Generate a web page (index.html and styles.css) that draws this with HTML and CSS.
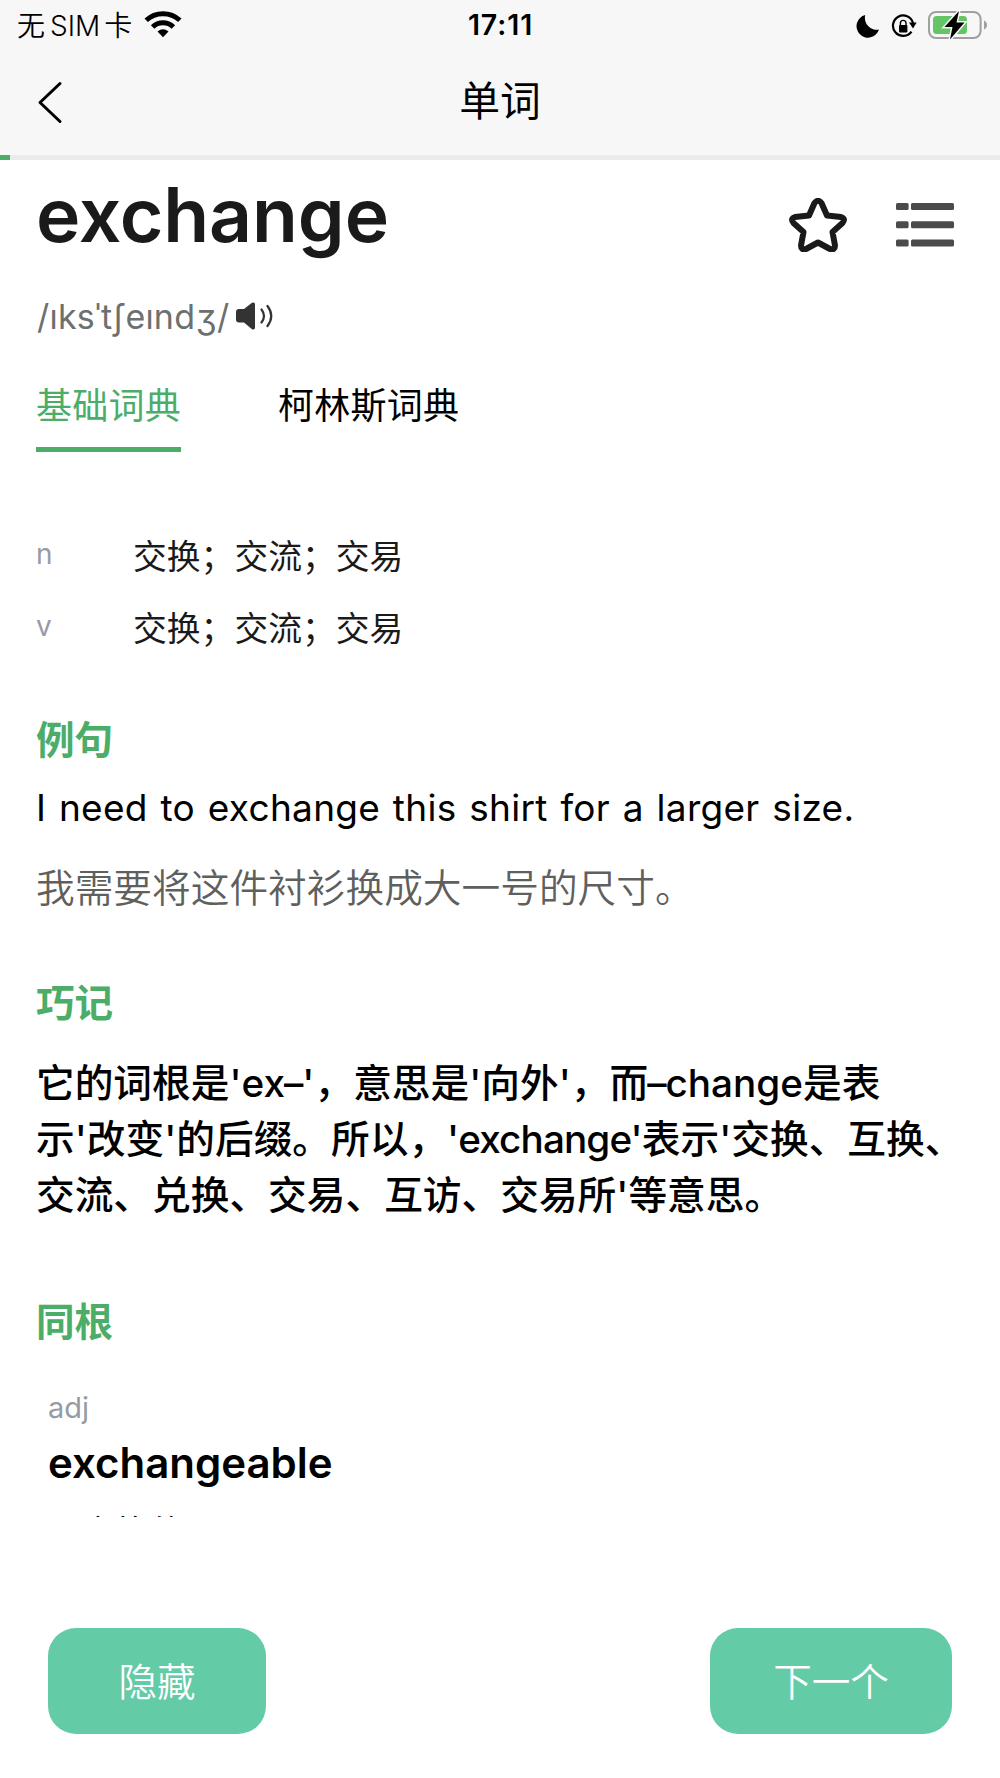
FILE: index.html
```html
<!DOCTYPE html>
<html lang="zh-CN">

<head>
    <meta charset="UTF-8">
    <meta name="viewport" content="width=device-width, initial-scale=1.0">
    <title>单词</title>
    <link rel="stylesheet" href="styles.css">
</head>

<body>
    <header class="header">
        <div class="status-bar">
            <div class="status-left">
                <span class="carrier">无<span class="sim">SIM</span>卡</span>
                <svg class="icon-wifi" width="38" height="28" viewBox="0 0 38 28">
                    <g fill="none" stroke="#000" stroke-width="5">
                        <path d="M2.2 10.3 A24.5 24.5 0 0 1 35.8 10.3"/>
                        <path d="M8.6 17 A15 15 0 0 1 29.4 17"/>
                    </g>
                    <path d="M13.5 21.6 Q19 17 24.5 21.6 L19 27.3 Z"/>
                </svg>
            </div>
            <span class="time">17:11</span>
            <div class="status-right">
                <svg width="24" height="24" viewBox="0 0 24 24">
                    <path d="M9.2 1 A11.5 11.5 0 1 0 23 15.6 A12 12 0 0 1 9.2 1 Z"/>
                </svg>
                <svg class="icon-lock" width="26" height="24" viewBox="0 0 26 24">
                    <path d="M22 9 A10.2 10.2 0 1 0 20.5 17.6" fill="none" stroke="#000" stroke-width="2.2"/>
                    <path d="M18 8.6 H25.6 L22 14.6 Z"/>
                    <rect x="8" y="11" width="8.4" height="7.4" rx="1"/>
                    <path d="M9.4 11.5 V9.2 A2.8 2.8 0 0 1 15 9.2 V11.5" fill="none" stroke="#000" stroke-width="1.4"/>
                </svg>
                <svg class="icon-battery" width="60" height="30" viewBox="0 0 60 30">
                    <rect x="1" y="2" width="51.6" height="26" rx="7" fill="none" stroke="#a0a0a0" stroke-width="2"/>
                    <path d="M56 10.5 Q59 12 59 15 Q59 18 56 19.5 Z" fill="#a0a0a0"/>
                    <rect x="5" y="6" width="34" height="18" rx="3.5" fill="#65c466"/>
                    <path d="M31 1 L16.5 17 H24.5 L22 29.5 L36.5 12.5 H28.5 Z" stroke="#f7f7f7" stroke-width="3" paint-order="stroke"/>
                </svg>
            </div>
        </div>
        <div class="nav-bar">
            <svg class="icon-back" width="26" height="44" viewBox="0 0 26 44">
                <path d="M23 3.5 L3 22.5 L23 41.5" fill="none" stroke="#000" stroke-width="3" stroke-linecap="round" stroke-linejoin="round"/>
            </svg>
            <span class="nav-title">单词</span>
        </div>
    </header>
    <div class="progress">
        <div class="progress-value"></div>
    </div>

    <main class="content">
        <div class="word-row">
            <h1 class="word">exchange</h1>
            <div class="word-actions">
                <svg width="58" height="54" viewBox="0 0 58 54">
                    <path d="M25.5 5 Q29 0.5 32.5 5 L38 17.5 L52 19 Q57 20.5 53.5 25 L43.5 34 L46 47.5 Q46 52.5 41 51 L29 44.5 L17 51 Q12 52.5 12 47.5 L14.5 34 L4.5 25 Q1 20.5 6 19 L20 17.5 Z" fill="none" stroke="#1a1a1a" stroke-width="6" stroke-linejoin="round"/>
                </svg>
                <svg width="58" height="44" viewBox="0 0 58 44" fill="#4b4b49">
                    <rect x="0" y="0" width="12.6" height="7" rx="1.5"/>
                    <rect x="15" y="0" width="43" height="7" rx="1.5"/>
                    <rect x="0" y="18.3" width="12.6" height="7" rx="1.5"/>
                    <rect x="15" y="18.3" width="43" height="7" rx="1.5"/>
                    <rect x="0" y="36.6" width="12.6" height="7" rx="1.5"/>
                    <rect x="15" y="36.6" width="43" height="7" rx="1.5"/>
                </svg>
            </div>
        </div>
        <div class="phonetic">
            <span>/ıksˈtʃeındʒ/</span>
            <svg class="icon-sound" width="38" height="28" viewBox="0 0 38 28">
                <path d="M3 7 H8 L16 0.8 Q19 -0.5 19 2.5 V25.5 Q19 28.5 16 27.2 L8 20.5 H3 Q0 20.5 0 17.5 V10 Q0 7 3 7 Z" fill="#333"/>
                <path d="M25.5 7.5 Q30.5 14 25.5 20.5 M31.5 4 Q39 14 31.5 24" fill="none" stroke="#333" stroke-width="2.2" stroke-linecap="round"/>
            </svg>
        </div>

        <div class="tabs">
            <div class="tab active">基础词典</div>
            <div class="tab">柯林斯词典</div>
        </div>

        <div class="definitions">
            <div class="definition">
                <span class="pos">n</span>
                <span class="meaning">交换；交流；交易</span>
            </div>
            <div class="definition">
                <span class="pos">v</span>
                <span class="meaning">交换；交流；交易</span>
            </div>
        </div>

        <h2 class="section-title">例句</h2>
        <p class="sentence">I need to exchange this shirt for a larger size.</p>
        <p class="translation">我需要将这件衬衫换成大一号的尺寸。</p>

        <h2 class="section-title">巧记</h2>
        <p class="memory">
            它的词根是'ex<span class="dash">–</span>'，意思是'向外'，而<span class="dash">–</span>change是表<br>
            示'改变'的后缀。所以，<span class="en">'exchange'</span>表示'交换、互换、<br>
            交流、兑换、交易、互访、交易所'等意思。
        </p>

        <h2 class="section-title">同根</h2>
        <div class="related">
            <p class="related-pos">adj</p>
            <p class="related-word">exchangeable</p>
            <p class="related-meaning">可交换的</p>
        </div>
    </main>

    <footer class="footer">
        <button class="btn btn-hide">隐藏</button>
        <button class="btn btn-next">下一个</button>
    </footer>
</body>

</html>
```
FILE: styles.css
```css
* {
    box-sizing: border-box;
}

body {
    font-family: Inter, "Noto Sans CJK SC", sans-serif;
    background-color: #fff;
    color: #000;
    margin: 0;
    height: 1778px;
    overflow: hidden;
}

h1, h2, p {
    margin: 0;
}

svg {
    display: block;
    flex-shrink: 0;
}

.header {
    background-color: #f7f7f7;
    height: 155px;
}

.status-bar {
    display: grid;
    grid-template-columns: 1fr auto 1fr;
    align-items: center;
    height: 50px;
    padding: 1px 12px 0 17px;
}

.status-left,
.status-right {
    display: flex;
    align-items: center;
}

.status-right {
    justify-content: flex-end;
}

.carrier {
    font-size: 28px;
    line-height: 50px;
    font-weight: 350;
}

.sim {
    margin: 0 4px 0 5px;
}

.icon-wifi {
    margin: -5px 0 0 12px;
}

.time {
    font-size: 28.5px;
    line-height: 50px;
    font-weight: 600;
    letter-spacing: 0.9px;
    margin: -2px 4px 0 0;
}

.icon-lock {
    margin-left: 11px;
}

.icon-battery {
    margin: -2px 0 0 11px;
}

.nav-bar {
    display: grid;
    grid-template-columns: 1fr auto 1fr;
    align-items: center;
    height: 105px;
    padding: 0 37px;
}

.icon-back {
    margin-top: -1px;
}

.nav-title {
    font-size: 40.8px;
    line-height: 50px;
    margin-top: -4px;
}

.progress {
    height: 5px;
    background-color: #ebebeb;
}

.progress-value {
    width: 1%;
    height: 5px;
    background-color: #4bad68;
}

.content {
    height: 1357px;
    padding: 10px 36px 0;
    overflow: hidden;
}

.word-row {
    display: flex;
    justify-content: space-between;
    height: 122px;
}

.word {
    font-size: 75px;
    line-height: 90px;
    font-weight: 600;
    letter-spacing: -0.1px;
    color: #1a1a1a;
}

.word-actions {
    display: flex;
    align-items: center;
    gap: 49px;
    height: 109px;
    padding-right: 10px;
}

.phonetic {
    display: flex;
    align-items: center;
    font-size: 34px;
    line-height: 50px;
    height: 50px;
    color: #6c706e;
    letter-spacing: 0.2px;
    padding-left: 1px;
}

.icon-sound {
    margin: -2px 0 0 7px;
}

.tabs {
    display: flex;
    gap: 97px;
    margin-top: 39px;
}

.tab {
    font-size: 36px;
    letter-spacing: 0.25px;
    line-height: 50px;
    height: 71px;
    border-bottom: 5px solid transparent;
}

.tab.active {
    color: #4bad68;
    border-bottom-color: #4bad68;
}

.definitions {
    margin: 69px 0 47px;
}

.definition {
    display: flex;
    line-height: 72px;
    height: 72px;
}

.pos {
    width: 97px;
    font-size: 28px;
    line-height: 66px;
    color: #979ba4;
}

.meaning {
    font-size: 33.8px;
    line-height: 71px;
    color: #1a1a1a;
}

.section-title {
    font-size: 38.6px;
    line-height: 56px;
    font-weight: 700;
    color: #4bad68;
}

.sentence {
    font-size: 37px;
    line-height: 56px;
    margin: 12px 0 24px;
    letter-spacing: 0.3px;
    word-spacing: 2px;
    white-space: nowrap;
}

.translation {
    font-size: 38.7px;
    line-height: 56px;
    font-weight: 350;
    color: #5f5f5e;
    margin-bottom: 59px;
}

.memory {
    font-size: 38.7px;
    line-height: 56px;
    font-weight: 500;
    margin: 24px 0 71px;
    white-space: nowrap;
}

.dash {
    margin: 0 -1px;
}

.en {
    letter-spacing: -0.9px;
}

.related {
    padding: 38px 12px 0;
}

.related-pos {
    font-size: 29px;
    line-height: 40px;
    color: #979ba4;
}

.related-word {
    font-size: 42px;
    line-height: 56px;
    font-weight: 600;
    margin-top: 7px;
}

.related-meaning {
    font-size: 34px;
    line-height: 50px;
    margin-top: 17px;
}

.footer {
    display: flex;
    justify-content: space-between;
    padding: 111px 48px 0;
}

.btn {
    height: 106px;
    border: none;
    border-radius: 28px;
    background-color: #64cba7;
    color: #fff;
    font-family: inherit;
    font-size: 38.6px;
    font-weight: 350;
    padding: 0 0 5px;
    cursor: pointer;
}

.btn-hide {
    width: 218px;
}

.btn-next {
    width: 242px;
}
```
